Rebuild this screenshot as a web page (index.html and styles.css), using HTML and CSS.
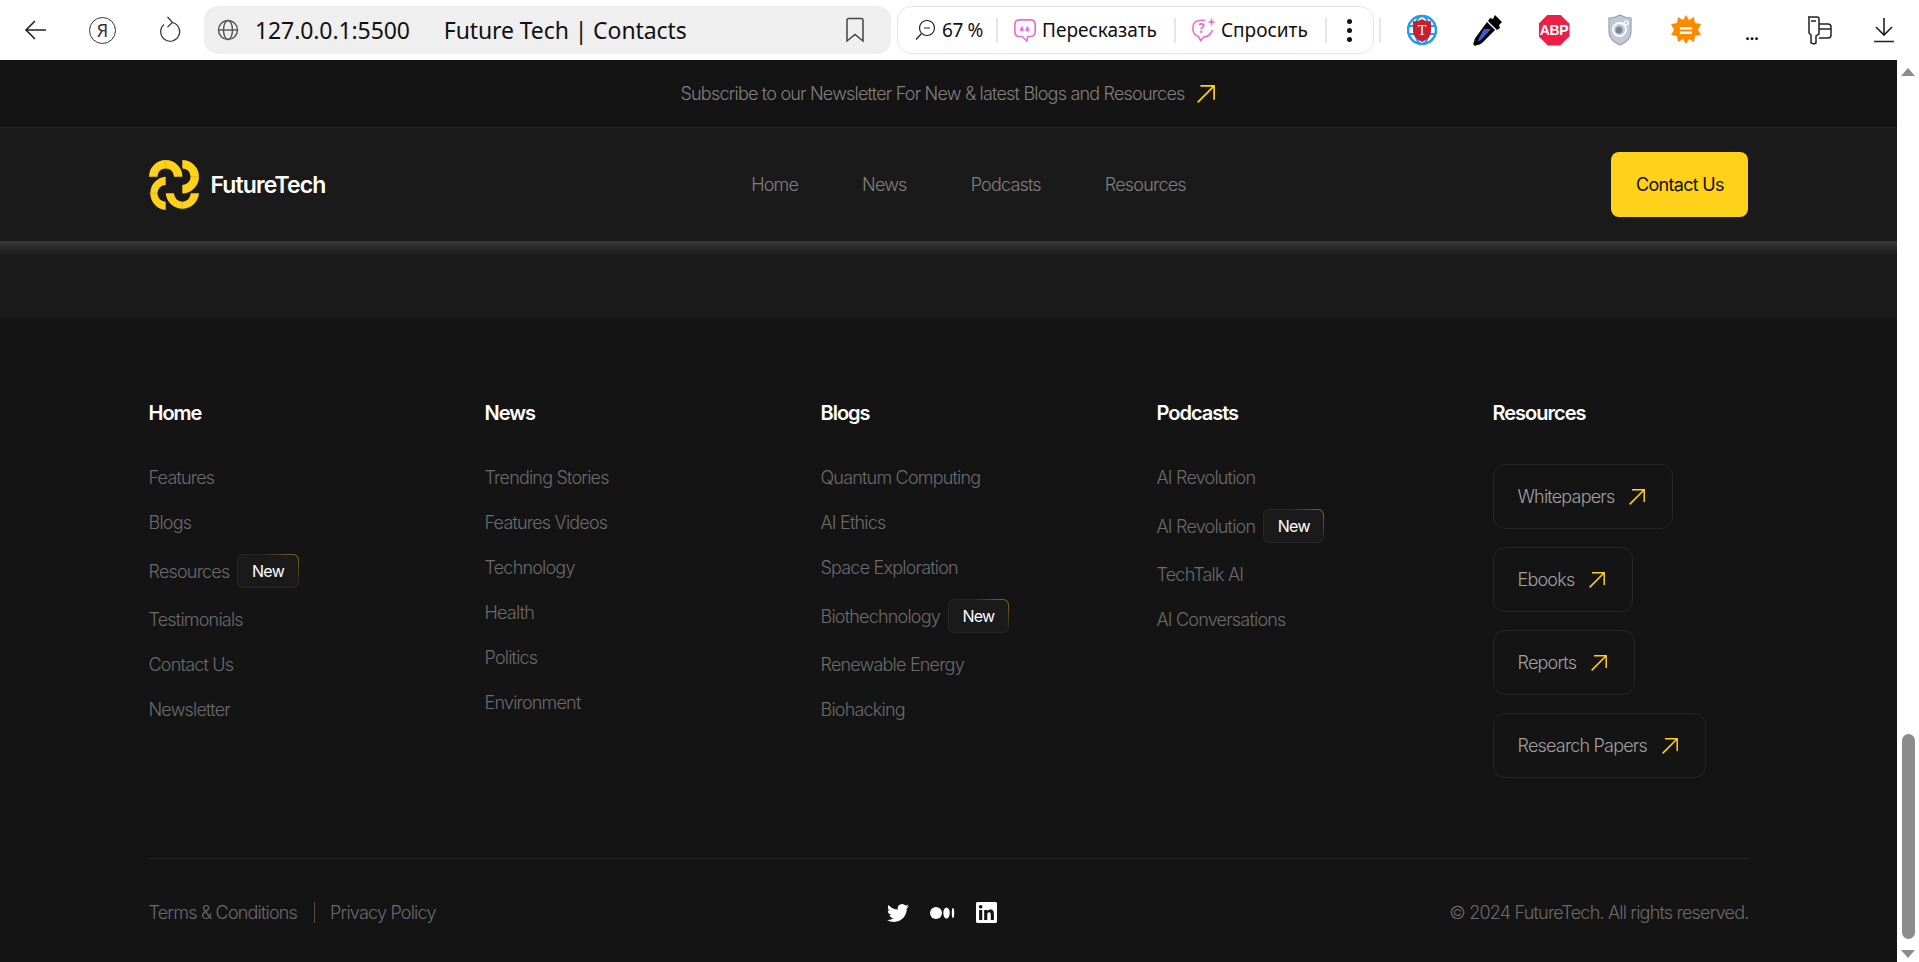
FILE: index.html
```html
<!DOCTYPE html>
<html lang="en">
<head>
<meta charset="UTF-8" />
<title>Future Tech | Contacts</title>
<link rel="stylesheet" href="styles.css">
</head>
<body>

<!-- browser toolbar -->
<div class="toolbar">
  <div class="tool">
    <svg width="24" height="24" viewBox="0 0 24 24" fill="none" stroke="#222" stroke-width="1.6"><path d="M22 12H2M11 3l-9 9 9 9"/></svg>
  </div>
  <div class="tool"><span class="ya">Я</span></div>
  <div class="tool">
    <svg width="24" height="30" viewBox="0 0 24 30" fill="none" stroke="#333" stroke-width="1.2"><path d="M14.500 7.500a9.500 9.500 0 1 1-8.500 2"/><path d="M9.500 2l5 5.500-5 4.500"/></svg>
  </div>
  <div class="address">
    <svg width="22" height="22" viewBox="0 0 22 22" fill="none" stroke="#555" stroke-width="1.4"><circle cx="11" cy="11" r="9.500"/><ellipse cx="11" cy="11" rx="4.500" ry="9.500"/><path d="M1.500 11h19"/></svg>
    <span class="host">127.0.0.1:5500</span>
    <span class="page-title">Future Tech | Contacts</span>
    <svg class="bookmark" width="20" height="26" viewBox="0 0 20 26" fill="none" stroke="#444" stroke-width="1.5"><path d="M2 3.500q0-2 2-2h12q2 0 2 2V24l-8-6.500L2 24z"/></svg>
  </div>
  <div class="assist">
    <svg class="zoom-icon" width="21" height="24" viewBox="0 0 21 24" fill="none" stroke="#222" stroke-width="1.2"><circle cx="12" cy="10" r="7.500"/><path d="M6.500 15.500L1 21.500M9 10h6"/></svg>
    <span class="percent">67 %</span>
    <i class="sep"></i>
    <svg width="24" height="28" viewBox="0 0 26 28" fill="none" stroke="#ee6fd2" stroke-width="1.800"><path d="M7 3h12q5 0 5 5v8q0 5-5 5h-3l-1 5-5-5H7q-5 0-5-5V8q0-5 5-5z"/><path d="M10 10l-2 3v2h3v-3h-1zM16 10l-2 3v2h3v-3h-1z" fill="#ee6fd2" stroke-width=".8"/></svg>
    <span class="assist-label">Пересказать</span>
    <i class="sep"></i>
    <svg width="25" height="30" viewBox="0 0 28 30" fill="none" stroke="#ee6fd2" stroke-width="1.800"><path d="M16 4.500Q13.500 4 12 4 2 4 2 13q0 7 6 9l3 5 3-4q8-1 10-8"/><path d="M23 1l1.200 3.800L28 6l-3.800 1.200L23 11l-1.200-3.800L18 6l3.800-1.200z" fill="#ee6fd2" stroke="none"/><text x="8.500" y="18" class="quest">?</text></svg>
    <span class="assist-label">Спросить</span>
    <i class="sep"></i>
    <span class="dots"><b></b><b></b><b></b></span>
  </div>
  <i class="sep outer"></i>
  <div class="ext">
    <svg width="30" height="32" viewBox="0 0 30 30"><circle cx="15" cy="15" r="14" fill="none" stroke="#1f9bf0" stroke-width="2.500"/><ellipse cx="15" cy="15" rx="7" ry="14" fill="none" stroke="#1f9bf0" stroke-width="2"/><path d="M1 11h28M1 19h28" stroke="#1f9bf0" stroke-width="2"/><path d="M6 6q5 1 9-2 4 3 9 2v10q0 7-9 11-9-4-9-11z" fill="#c81e32"/><text x="15" y="20" class="ext-t">T</text></svg>
  </div>
  <div class="ext">
    <svg width="30" height="32" viewBox="0 0 30 32"><path d="M22 1l7 7-3 3 1 3-3 2-9-9 2-3 3 1z" fill="#000"/><path d="M14 8l8 8L9 29q-2 2-5 2l-2 1-2-2 1-2q0-3 2-5z" fill="#000"/><path d="M11 15h7L8 26q-1 1-3 1l1-3z" fill="#3f5bd0"/></svg>
  </div>
  <div class="ext">
    <div class="abp">ABP</div>
  </div>
  <div class="ext">
    <svg width="24" height="32" viewBox="0 0 24 32"><path d="M12 1q5 3 11 3v14q0 8-11 13Q1 26 1 18V4q6 0 11-3z" fill="#c3c9d6" stroke="#97a0b3" stroke-width="1.200"/><circle cx="11.500" cy="15.500" r="6.500" fill="none" stroke="#fff" stroke-width="1.800"/><circle cx="11" cy="16" r="3.500" fill="#7d869a"/><circle cx="18" cy="9" r="2" fill="none" stroke="#fff" stroke-width="1.200"/></svg>
  </div>
  <div class="ext">
    <svg width="30" height="30" viewBox="0 0 30 30"><path d="M15 0l3 5 5-3 1 6 6 1-3 6 3 5-6 1-1 6-5-3-3 5-3-5-5 3-1-6-6-1 3-5-3-6 6-1 1-6 5 3z" fill="#ff8a00"/><path d="M9 12h12v2.500H9zM9 16.500h12V19H9z" fill="#fff"/></svg>
  </div>
  <div class="ext more">...</div>
  <div class="ext">
    <svg width="27" height="30" viewBox="0 0 27 30" fill="none" stroke="#222" stroke-width="1.500"><path d="M3 2h9q2 0 2 2v15l-3 2v7l-2 1-3-1v-8L4 18V4q0-2-1-2z"/><path d="M14 9h9q3 0 3 3v8q0 3-3 3h-9M14 14h12M6 6h5"/></svg>
  </div>
  <div class="ext">
    <svg width="22" height="26" viewBox="0 0 22 26" fill="none" stroke="#222" stroke-width="1.600"><path d="M11 1v17M3 10l8 8 8-8M1 24.500h20"/></svg>
  </div>
</div>

<div class="window">
  <div class="page">

    <div class="subscribe">
      <span>Subscribe to our Newsletter For New &amp; latest Blogs and Resources</span>
      <svg class="arrow" width="18" height="18" viewBox="0 0 16 16"><path d="M.6 15.400L15.200.8M3 .8h12.200V13"/></svg>
    </div>

    <header class="nav">
      <div class="wrap nav-row">
        <a class="brand">
          <svg width="50" height="50" viewBox="0 0 50 50" fill="#ffd11a">
            <path d="M0 16.700A16.700 16.700 0 0 1 33.400 16.700H25A8.300 8.300 0 0 0 8.400 16.700Z"/>
            <path d="M16.700 16.700A16.700 16.700 0 0 0 16.700 50V41.700A8.300 8.300 0 0 1 16.700 25Z"/>
            <path d="M33.300 0A16.700 16.700 0 0 1 33.300 33.400V25A8.300 8.300 0 0 0 33.300 8.400Z"/>
            <path d="M16.700 33.300A16.700 16.700 0 0 0 50 33.300H41.700A8.300 8.300 0 0 1 25 33.300Z"/>
            <path d="M16.700 0v8.400M0 33.300h8.400M50 16.700h-8.400M33.300 50v-8.400" stroke="#c9a414" stroke-width=".5"/>
          </svg>
          <span>FutureTech</span>
        </a>
        <nav class="nav-links">
          <a>Home</a>
          <a>News</a>
          <a>Podcasts</a>
          <a>Resources</a>
        </nav>
        <a class="contact-btn">Contact Us</a>
      </div>
    </header>

    <div class="band"></div>

    <footer class="footer">
      <div class="wrap">
        <div class="columns">
          <div class="col">
            <h4>Home</h4>
            <a>Features</a>
            <a>Blogs</a>
            <a class="with-badge">Resources <span class="badge">New</span></a>
            <a>Testimonials</a>
            <a>Contact Us</a>
            <a>Newsletter</a>
          </div>
          <div class="col">
            <h4>News</h4>
            <a>Trending Stories</a>
            <a>Features Videos</a>
            <a>Technology</a>
            <a>Health</a>
            <a>Politics</a>
            <a>Environment</a>
          </div>
          <div class="col">
            <h4>Blogs</h4>
            <a>Quantum Computing</a>
            <a>AI Ethics</a>
            <a>Space Exploration</a>
            <a class="with-badge">Biothechnology <span class="badge">New</span></a>
            <a>Renewable Energy</a>
            <a>Biohacking</a>
          </div>
          <div class="col">
            <h4>Podcasts</h4>
            <a>AI Revolution</a>
            <a class="with-badge">AI Revolution <span class="badge">New</span></a>
            <a>TechTalk AI</a>
            <a>AI Conversations</a>
          </div>
          <div class="col">
            <h4>Resources</h4>
            <a class="res-btn">Whitepapers <svg class="arrow" width="16" height="16" viewBox="0 0 16 16"><path d="M.6 15.400L15.200.8M3 .8h12.200V13"/></svg></a>
            <a class="res-btn">Ebooks <svg class="arrow" width="16" height="16" viewBox="0 0 16 16"><path d="M.6 15.400L15.200.8M3 .8h12.200V13"/></svg></a>
            <a class="res-btn">Reports <svg class="arrow" width="16" height="16" viewBox="0 0 16 16"><path d="M.6 15.400L15.200.8M3 .8h12.200V13"/></svg></a>
            <a class="res-btn">Research Papers <svg class="arrow" width="16" height="16" viewBox="0 0 16 16"><path d="M.6 15.400L15.200.8M3 .8h12.200V13"/></svg></a>
          </div>
        </div>

        <div class="bottom">
          <div class="legal">
            <a>Terms &amp; Conditions</a>
            <i class="legal-sep"></i>
            <a>Privacy Policy</a>
          </div>
          <div class="social">
            <svg width="22" height="22" viewBox="0 0 24 24" fill="#fff"><path d="M23.953 4.570a10 10 0 01-2.825.775 4.958 4.958 0 002.163-2.723c-.951.555-2.005.959-3.127 1.184a4.920 4.920 0 00-8.384 4.482C7.690 8.095 4.067 6.130 1.640 3.162a4.822 4.822 0 00-.666 2.475c0 1.710.870 3.213 2.188 4.096a4.904 4.904 0 01-2.228-.616v.060a4.923 4.923 0 003.946 4.827 4.996 4.996 0 01-2.212.085 4.936 4.936 0 004.604 3.417 9.867 9.867 0 01-6.102 2.105c-.390 0-.779-.023-1.170-.067a13.995 13.995 0 007.557 2.209c9.053 0 13.998-7.496 13.998-13.985 0-.210 0-.420-.015-.630A9.935 9.935 0 0024 4.590z"/></svg>
            <svg width="25" height="12" viewBox="0 0 25 12" fill="#fff"><ellipse cx="6" cy="6" rx="6" ry="6"/><ellipse cx="16.500" cy="6" rx="3.200" ry="5.600"/><ellipse cx="23" cy="6" rx="1.200" ry="5"/></svg>
            <svg width="21" height="21" viewBox="0 0 24 24" fill="#fff"><path d="M20.447 20.452h-3.554v-5.569c0-1.328-.027-3.037-1.852-3.037-1.853 0-2.136 1.445-2.136 2.939v5.667H9.351V9h3.414v1.561h.046c.477-.9 1.637-1.850 3.370-1.850 3.601 0 4.267 2.370 4.267 5.455v6.286zM5.337 7.433c-1.144 0-2.063-.926-2.063-2.065 0-1.138.920-2.063 2.063-2.063 1.140 0 2.064.925 2.064 2.063 0 1.139-.925 2.065-2.064 2.065zm1.782 13.019H3.555V9h3.564v11.452zM22.225 0H1.771C.792 0 0 .774 0 1.729v20.542C0 23.227.792 24 1.771 24h20.451C23.200 24 24 23.227 24 22.271V1.729C24 .774 23.200 0 22.222 0h.003z"/></svg>
          </div>
          <div class="copy">© 2024 FutureTech. All rights reserved.</div>
        </div>
      </div>
    </footer>
  </div>

  <!-- scrollbar -->
  <div class="scrollbar">
    <span class="tri-up"></span>
    <span class="thumb"></span>
    <span class="tri-down"></span>
  </div>
</div>

</body>
</html>
```

FILE: styles.css
```css
* {
    box-sizing: border-box;
}

html, body {
    margin: 0;
    height: 962px;
    overflow: hidden;
}

body {
    background: #fff;
    font-family: "Inter", "Liberation Sans", sans-serif;
}

a {
    text-decoration: none;
}

/* browser toolbar */
.toolbar {
    height: 60px;
    display: flex;
    align-items: center;
    padding-left: 2px;
    background: #fff;
    font-family: "Noto Sans", "Open Sans", sans-serif;
    color: #111;
}

.tool {
    width: 67px;
    display: flex;
    justify-content: center;
    align-items: center;
}

.ya {
    width: 27px;
    height: 27px;
    border: 1.3px solid #333;
    border-radius: 50%;
    display: flex;
    justify-content: center;
    align-items: center;
    font-size: 18px;
    color: #333;
}

.address {
    width: 687px;
    height: 48px;
    margin-left: 1px;
    padding-left: 13px;
    display: flex;
    align-items: center;
    background: #efefef;
    border-radius: 14px;
    font-size: 23px;
}

.host {
    margin-left: 16px;
    letter-spacing: -.1px;
}

.page-title {
    margin-left: 34px;
    letter-spacing: -.1px;
}

.bookmark {
    margin-left: auto;
    margin-right: 26px;
}

.assist {
    width: 477px;
    height: 48px;
    margin-left: 6px;
    padding-left: 17px;
    display: flex;
    align-items: center;
    border: 1.5px solid #e6e6e6;
    border-radius: 14px;
    font-size: 19px;
}

.percent {
    margin-left: 6px;
    width: 54px;
    letter-spacing: -.4px;
}

.assist-label {
    margin-left: 5px;
    margin-right: 17px;
}

.assist .sep {
    margin-right: 15px;
}

.quest {
    font-size: 15px;
    font-weight: 700;
    fill: #ee6fd2;
    stroke: none;
}

.sep {
    display: block;
    width: 2px;
    height: 25px;
    background: #e6e6e6;
}

.sep.outer {
    margin-left: 5px;
    margin-right: 8px;
}

.dots {
    margin-left: 5px;
    display: flex;
    flex-direction: column;
    gap: 4px;
}

.dots b {
    width: 5px;
    height: 5px;
    border-radius: 50%;
    background: #111;
}

.ext {
    width: 66px;
    display: flex;
    justify-content: center;
    align-items: center;
}

.ext-t {
    font-family: "Liberation Serif", serif;
    font-size: 14px;
    fill: #fff;
    text-anchor: middle;
}

.abp {
    width: 31px;
    height: 31px;
    background: #ee1f47;
    clip-path: polygon(30% 0, 70% 0, 100% 30%, 100% 70%, 70% 100%, 30% 100%, 0 70%, 0 30%);
    color: #fff;
    font: 700 14px "Liberation Sans", sans-serif;
    letter-spacing: -.4px;
    display: flex;
    justify-content: center;
    align-items: center;
}

.more {
    font-size: 16px;
    font-weight: 700;
    padding-top: 8px;
}

/* page */
.window {
    height: 902px;
    display: flex;
}

.page {
    width: 1897px;
    height: 902px;
    overflow: hidden;
    background: #141414;
}

.wrap {
    width: 1600px;
    margin: 0 auto;
}

.subscribe {
    height: 68px;
    display: flex;
    justify-content: center;
    align-items: center;
    gap: 12px;
    padding-right: 2px;
    background: #141414;
    border-bottom: 1px solid #262626;
    font-size: 18px;
    font-weight: 300;
    letter-spacing: -.8px;
    color: #81807e;
}

.arrow {
    flex: none;
    fill: none;
    stroke: #ffd11a;
    stroke-width: 1.5;
}

.nav {
    background: #1a1a1a;
    padding: 24px 0;
}

.nav-row {
    display: flex;
    justify-content: space-between;
    align-items: center;
}

.brand {
    display: flex;
    align-items: center;
    gap: 12px;
    color: #fff;
    font-size: 23px;
    font-weight: 600;
    letter-spacing: -.9px;
}

.nav-links {
    display: flex;
    gap: 64px;
    font-size: 18px;
    font-weight: 300;
    letter-spacing: -.8px;
    color: #81807e;
}

.contact-btn {
    height: 65px;
    width: 137px;
    display: flex;
    justify-content: center;
    align-items: center;
    background: #ffd11a;
    border-radius: 8px;
    font-size: 18px;
    letter-spacing: -.7px;
    color: #0f0f0f;
}

.band {
    height: 77px;
    background: linear-gradient(#393939, #2a2a2a 6px, #1a1a1a 15px);
}

/* footer */
.footer {
    background: #141414;
}

.columns {
    display: grid;
    grid-template-columns: repeat(5, 256px);
    gap: 80px;
    padding: 80px 0;
    border-bottom: 1px solid #262626;
}

.col {
    display: flex;
    flex-direction: column;
    align-items: flex-start;
    gap: 18px;
    font-size: 18px;
    line-height: 27px;
    font-weight: 300;
    letter-spacing: -.8px;
    color: #6b6b6b;
}

.col h4 {
    margin: 0 0 18px;
    font-size: 20px;
    line-height: 30px;
    font-weight: 600;
    letter-spacing: -1px;
    color: #fff;
}

.with-badge {
    display: flex;
    align-items: center;
    gap: 8px;
}

.badge {
    height: 34px;
    padding: 0 13.500px;
    display: flex;
    align-items: center;
    border: 1px solid transparent;
    border-radius: 6px;
    background: linear-gradient(#1a1a1a, #1a1a1a) padding-box, linear-gradient(40deg, #262626 65%, #8c7016) border-box;
    font-size: 16px;
    font-weight: 400;
    letter-spacing: -.7px;
    color: #fff;
}

.res-btn {
    height: 65px;
    padding: 0 27px 0 24px;
    display: flex;
    align-items: center;
    gap: 15px;
    border: 1px solid #262626;
    border-radius: 12px;
    color: #a0a0a2;
}

.bottom {
    display: flex;
    justify-content: space-between;
    align-items: center;
    padding: 40px 0;
    font-size: 18px;
    line-height: 27px;
    font-weight: 300;
    letter-spacing: -.8px;
    color: #6b6b6b;
}

.legal {
    display: flex;
    align-items: center;
    gap: 15px;
}

.legal-sep {
    display: block;
    width: 1px;
    height: 21px;
    margin-left: 2px;
    background: #5a4c38;
}

.social {
    display: flex;
    align-items: center;
    gap: 21px;
}

/* scrollbar */
.scrollbar {
    width: 22px;
    height: 902px;
    position: relative;
    background: #fff;
}

.tri-up, .tri-down {
    position: absolute;
    left: 4px;
    width: 0;
    height: 0;
    border-left: 7.500px solid transparent;
    border-right: 7.500px solid transparent;
}

.tri-up {
    top: 8px;
    border-bottom: 8px solid #8c8c8c;
}

.tri-down {
    bottom: 4px;
    border-top: 8px solid #8c8c8c;
}

.thumb {
    position: absolute;
    left: 5px;
    top: 674px;
    width: 13px;
    height: 205px;
    border-radius: 6.500px;
    background: #8c8c8c;
}
```
